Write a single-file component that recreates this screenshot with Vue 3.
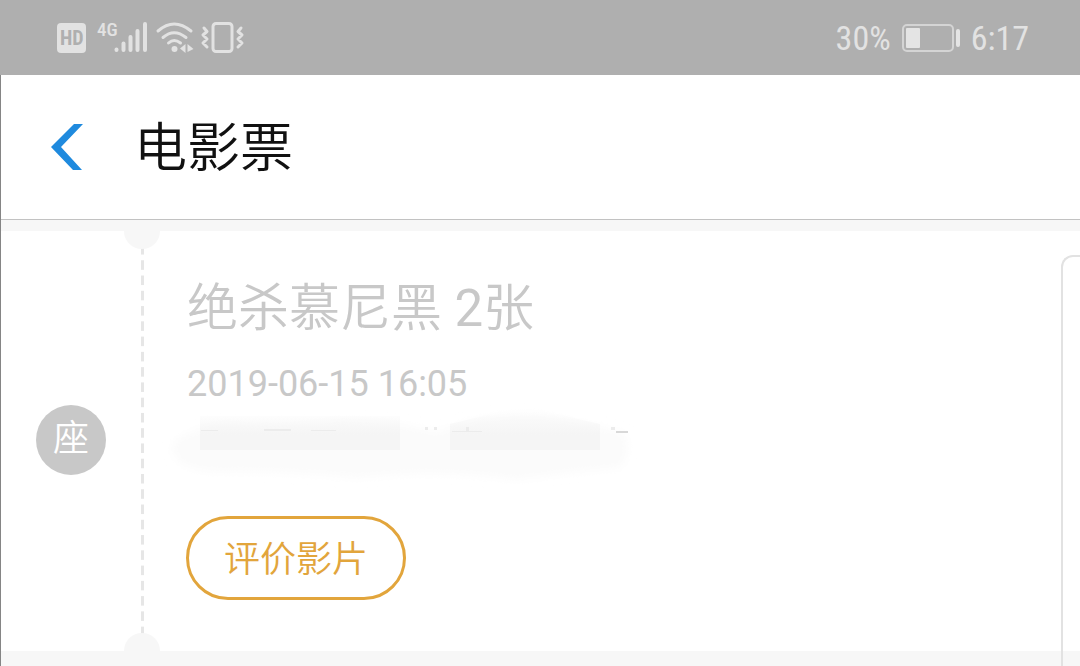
<script setup>
import { ref } from 'vue'

const ticket = ref({
  film: '绝杀慕尼黑',
  count: 2,
  showtime: '2019-06-15 16:05',
  kind: '座',
})
</script>

<template>
  <div class="screen">
    <div class="status">
      <div class="group">
        <svg class="icon" width="190" height="36" viewBox="0 0 190 36" aria-label="HD 4G" role="img">
          <rect x="1" y="2" width="29" height="30" rx="4" fill="#e2e2e2" />
          <text x="4" y="24" class="hd">HD</text>
          <text x="41" y="15" class="net">4G</text>
          <g stroke="#e2e2e2" stroke-width="4" stroke-linecap="round">
            <path d="M60.500 28.500V29M67.500 22.500V29M74.500 16V29M81.500 10V29M89 3V29" />
          </g>
          <g fill="none" stroke="#e2e2e2" stroke-width="3" stroke-linecap="round">
            <path d="M102 10Q118 -4 135 10" />
            <path d="M107 16.500Q118 7 130 16.500" />
            <path d="M112.500 22Q118 17 124.500 22" />
          </g>
          <circle cx="118.500" cy="28" r="3" fill="#e2e2e2" />
          <path d="M129.500 23V32L124 27.500ZM131.500 23L137.500 28L131.500 31Z" fill="#e2e2e2" />
          <rect x="157" y="2.500" width="19" height="28" rx="3" fill="none" stroke="#e2e2e2" stroke-width="3" />
          <path
            d="M148 7L151 10.500L147 14L151 18L147 22L151 26M185 7L182 10.500L186 14L182 18L186 22L182 26"
            fill="none" stroke="#e2e2e2" stroke-width="3" stroke-linejoin="round" stroke-linecap="round"
          />
        </svg>
      </div>
      <div class="group right">
        <span>30%</span>
        <svg class="icon" width="58" height="28" viewBox="0 0 58 28" aria-hidden="true">
          <rect x="1" y="1" width="50" height="26" rx="4" fill="none" stroke="#d4d4d4" stroke-width="2" />
          <rect x="4" y="4" width="14" height="20" rx="1" fill="#e4e4e4" />
          <rect x="54" y="5" width="4" height="18" rx="2" fill="#e4e4e4" />
        </svg>
        <span>6:17</span>
      </div>
    </div>

    <main class="page">
      <header class="bar">
        <button class="back" type="button" aria-label="返回">
          <svg width="34" height="48" viewBox="0 0 34 48" aria-hidden="true">
            <path d="M24 1H33L11 24L32 47H23L1 24Z" fill="#1f8ade" />
          </svg>
        </button>
        <h1>电影票</h1>
      </header>

      <section class="list">
        <article class="card">
          <div class="rail">
            <span class="kind">{{ ticket.kind }}</span>
          </div>
          <div class="perforation"></div>
          <div class="details">
            <h2>{{ ticket.film }} <span class="count">{{ ticket.count }}</span>张</h2>
            <p class="time">{{ ticket.showtime }}</p>
            <svg class="smudge" width="480" height="80" viewBox="0 0 480 80" aria-hidden="true">
              <defs>
                <filter id="soft" x="-10%" y="-30%" width="120%" height="160%">
                  <feGaussianBlur stdDeviation="5" />
                </filter>
                <linearGradient id="fade" x1="0" y1="0" x2="0" y2="1">
                  <stop offset="0" stop-color="#f5f5f5" stop-opacity="0" />
                  <stop offset="0.6" stop-color="#f5f5f5" />
                </linearGradient>
              </defs>
              <path
                d="M4 34Q20 18 60 14Q110 22 170 10Q220 10 270 22Q320 2 370 4Q420 14 455 22Q466 40 452 58Q400 62 350 70Q270 58 190 68Q100 60 50 62Q2 60 4 34Z"
                fill="#fbfbfb" filter="url(#soft)"
              />
              <path d="M32 6H232V40H32ZM282 14L330 2H380L432 14V40H282Z" fill="url(#fade)" />
              <g fill="#ececec">
                <rect x="33" y="20" width="17" height="1" />
                <rect x="96" y="19" width="27" height="2" />
                <rect x="143" y="20" width="25" height="1" />
                <rect x="257" y="17" width="3" height="3" />
                <rect x="266" y="17" width="3" height="3" />
                <rect x="284" y="21" width="30" height="1" />
                <rect x="298" y="17" width="3" height="4" />
                <rect x="443" y="17" width="4" height="3" />
                <rect x="448" y="21" width="12" height="2" fill="#d8d8d8" />
              </g>
            </svg>
            <button class="review" type="button">评价影片</button>
          </div>
        </article>
        <div class="next"></div>
      </section>
    </main>
  </div>
</template>

<style>
body {
  margin: 0;
  background: #f7f7f7;
}
</style>

<style scoped>
.screen {
  min-height: 100vh;
  display: flex;
  flex-direction: column;
  overflow: hidden;
  box-sizing: border-box;
  font-family: Roboto, "Noto Sans CJK SC", sans-serif;
  font-weight: 400;
}

.status {
  display: flex;
  justify-content: space-between;
  align-items: center;
  box-sizing: border-box;
  height: 75px;
  padding: 2px 51px 0 56px;
  background: #afafaf;
  color: #e2e2e2;
  font-family: "Roboto Condensed", "Liberation Sans Narrow", Roboto, sans-serif;
  font-size: 34px;
  line-height: 40px;
}

.group {
  display: flex;
  align-items: center;
}

.right {
  gap: 11px;
  padding-bottom: 2px;
}

.icon {
  display: block;
  overflow: visible;
}

.hd {
  font: 700 20px "Roboto Condensed", "Liberation Sans Narrow", Roboto, sans-serif;
  fill: #afafaf;
}

.net {
  font: 500 19px "Roboto Condensed", "Liberation Sans Narrow", Roboto, sans-serif;
  fill: #e2e2e2;
}

.page {
  flex: 1;
  display: flex;
  flex-direction: column;
  border-left: 1px solid #858585;
}

.bar {
  display: flex;
  align-items: center;
  gap: 50px;
  height: 144px;
  padding-left: 49px;
  background: #fff;
  border-bottom: 1px solid #c2c2c2;
}

.back {
  display: flex;
  padding: 0;
  border: 0;
  background: none;
}

h1 {
  margin: 0;
  padding-top: 4px;
  color: #111;
  font-size: 53px;
  line-height: 64px;
  font-weight: 350;
}

.list {
  position: relative;
  flex: 1;
  padding-top: 11px;
  background: #f7f7f7;
}

.card {
  display: grid;
  grid-template-columns: 123px 36px 1fr;
  height: 420px;
  background: #fff;
}

.rail {
  display: flex;
  align-items: center;
  padding: 0 0 2px 35px;
}

.kind {
  width: 70px;
  height: 70px;
  border-radius: 50%;
  background: #c8c8c8;
  color: #fff;
  font-size: 36px;
  font-weight: 350;
  line-height: 68px;
  text-align: center;
}

.perforation {
  position: relative;
  padding: 14px 0 9px;
  background-image: linear-gradient(#e6e6e6 60%, transparent 60%);
  background-size: 3px 15px;
  background-origin: content-box;
  background-clip: content-box;
  background-position: 50% 0;
  background-repeat: no-repeat round;
}

.perforation::before,
.perforation::after {
  content: "";
  position: absolute;
  left: 0;
  width: 36px;
  height: 18px;
  background: #f7f7f7;
}

.perforation::before {
  top: 0;
  border-radius: 0 0 18px 18px;
}

.perforation::after {
  bottom: 0;
  border-radius: 18px 18px 0 0;
}

.details {
  display: flex;
  flex-direction: column;
  align-items: flex-start;
  padding: 46px 0 0 27px;
  color: #c8c8c8;
}

h2 {
  margin: 0;
  font-size: 51px;
  line-height: 64px;
  font-weight: 350;
}

.count {
  font-weight: 400;
}

.time {
  margin: 21px 0 0;
  font-size: 36px;
  line-height: 44px;
}

.smudge {
  display: block;
  margin: 4px 0 0 -19px;
  overflow: visible;
}

.review {
  width: 220px;
  height: 84px;
  margin-top: 26px;
  margin-left: -1px;
  padding: 4px 0 0;
  border: 3px solid #e2a53c;
  border-radius: 42px;
  background: #fff;
  color: #e2a53c;
  font-family: inherit;
  font-size: 36px;
  font-weight: 350;
  line-height: 44px;
}

.next {
  position: absolute;
  top: 35px;
  right: 0;
  bottom: 0;
  width: 17px;
  border: solid #e2e2e2;
  border-width: 2px 0 0 2px;
  border-radius: 12px 0 0 0;
}
</style>
